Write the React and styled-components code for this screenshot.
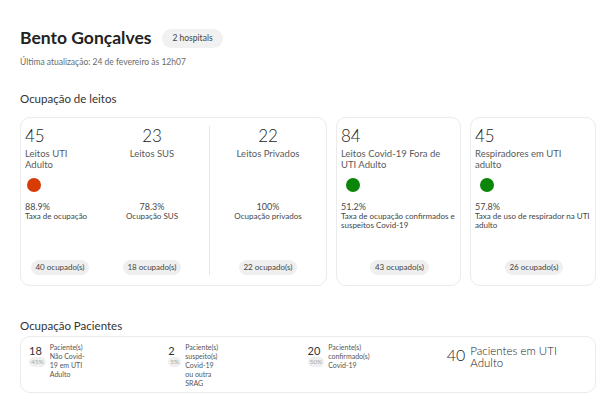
import React from 'react';
import styled, { createGlobalStyle } from 'styled-components';

const Global = createGlobalStyle`
  html, body { margin: 0; padding: 0; background: #fff; }
  body { font-family: Lato, "Noto Sans", sans-serif; color: #333; }
  * { box-sizing: border-box; }
`;

const Page = styled.div`
  width: 600px;
  padding: 28px 4px 0 20px;
`;

const TitleRow = styled.div`
  display: flex;
  align-items: center;
  gap: 11px;
  height: 20px;
`;

const Title = styled.h1`
  margin: 0;
  font-size: 17.5px;
  line-height: 20px;
  font-weight: 700;
  color: #222;
`;

const Tag = styled.span`
  display: inline-block;
  height: 19px;
  line-height: 19px;
  padding: 0 10px;
  border-radius: 10px;
  background: #f1f1f1;
  color: #444;
  font-size: 8.5px;
`;

const Updated = styled.div`
  margin-top: 9px;
  font-size: 8.5px;
  line-height: 10px;
  color: #6b6b6b;
`;

const SectionTitle = styled.h2`
  margin: ${p => p.$top}px 0 0;
  font-size: 11.5px;
  line-height: 14px;
  font-weight: 400;
  color: #333;
`;

const CardsRow = styled.div`
  margin-top: 11px;
  display: flex;
  gap: 9px;
  height: 169px;
`;

const Card = styled.div`
  width: ${p => p.$w}px;
  border: 1px solid #ebebeb;
  border-radius: 10px;
  background: #fff;
  padding: 8px 2px 10px 4px;
  display: flex;
  flex-direction: column;
`;

const WideCard = styled(Card)`
  display: grid;
  grid-template-columns: 70px 114px 1px 1fr;
  padding: 8px 0 10px 4px;
`;

const Divider = styled.div`
  background: #e6e6e6;
  align-self: stretch;
`;

const Stat = styled.div`
  display: flex;
  flex-direction: column;
  align-items: ${p => (p.$center ? 'center' : 'flex-start')};
  text-align: ${p => (p.$center ? 'center' : 'left')};
  min-width: 0;
  height: 100%;
`;

const Num = styled.div`
  font-size: 17px;
  line-height: 19px;
  font-weight: 300;
  color: #1c1c1c;
`;

const Label = styled.div`
  margin-top: 4px;
  font-size: 9.5px;
  line-height: 10.5px;
  height: 21px;
  color: #5a5a5a;
  max-width: ${p => p.$max || 105}px;
`;

const DotSlot = styled.div`
  margin-top: 8px;
  height: 14px;
  padding-left: ${p => p.$inset}px;
`;

const Dot = styled.span`
  display: block;
  width: 14px;
  height: 14px;
  border-radius: 50%;
  background: ${p => p.$color};
`;

const Pct = styled.div`
  margin-top: 8.5px;
  font-size: 9px;
  line-height: 11px;
  color: #4a4a4a;
`;

const Desc = styled.div`
  font-size: 8px;
  line-height: 9.5px;
  color: #444;
`;

const Pill = styled.div`
  margin-top: auto;
  align-self: center;
  height: 15px;
  line-height: 15px;
  padding: 0 4.5px;
  border-radius: 8px;
  background: #efefef;
  color: #444;
  font-size: 8px;
  white-space: nowrap;
`;

const PatientsCard = styled.div`
  margin-top: 3px;
  width: 576px;
  border: 1px solid #ebebeb;
  border-radius: 10px;
  padding: 6px 9px 4px 8px;
  display: grid;
  grid-template-columns: repeat(4, 1fr);
`;

const PItem = styled.div`
  display: flex;
  align-items: flex-start;
  gap: 4px;
`;

const PLeft = styled.div`
  display: flex;
  flex-direction: column;
  align-items: flex-start;
  padding-top: 2px;
`;

const PNum = styled.div`
  font-size: 11px;
  line-height: 12px;
  color: #333;
`;

const PBadge = styled.div`
  font-size: 6.5px;
  line-height: 10px;
  padding: 0 2px;
  border-radius: 5px;
  background: #efefef;
  color: #a8a8a8;
`;

const PText = styled.div`
  font-size: 7px;
  line-height: 9px;
  color: #555;
  max-width: ${p => p.$max}px;
`;

const BigItem = styled.div`
  display: flex;
  align-items: flex-start;
  gap: 5px;
  padding-top: 2px;
`;

const BigNum = styled.div`
  font-size: 16px;
  line-height: 19px;
  font-weight: 300;
  color: #1c1c1c;
`;

const BigText = styled.div`
  font-size: 11.5px;
  line-height: 11.5px;
  font-weight: 300;
  color: #222;
  max-width: 100px;
`;

const RED = '#d93b07';
const GREEN = '#0b860b';

function StatBlock({ num, label, pct, desc, pill, dot, center, labelMax, inset = 3 }) {
  return (
    <Stat $center={center}>
      <Num>{num}</Num>
      <Label $max={labelMax}>{label}</Label>
      <DotSlot $inset={inset}>{dot && <Dot $color={dot} />}</DotSlot>
      <Pct>{pct}</Pct>
      <Desc>{desc}</Desc>
      <Pill>{pill}</Pill>
    </Stat>
  );
}

const patients = [
  { n: '18', p: '45%', t: 'Paciente(s) Não Covid-19 em UTI Adulto', max: 38 },
  { n: '2', p: '5%', t: 'Paciente(s) suspeito(s) Covid-19 ou outra SRAG', max: 36 },
  { n: '20', p: '50%', t: 'Paciente(s) confirmado(s) Covid-19', max: 50 },
];

export default function App() {
  return (
    <>
      <Global />
      <Page>
        <TitleRow>
          <Title>Bento Gonçalves</Title>
          <Tag>2 hospitals</Tag>
        </TitleRow>
        <Updated>Última atualização: 24 de fevereiro às 12h07</Updated>

        <SectionTitle $top={25}>Ocupação de leitos</SectionTitle>
        <CardsRow>
          <WideCard $w={307}>
            <StatBlock
              num="45"
              label="Leitos UTI Adulto"
              labelMax={62}
              dot={RED}
              inset={2}
              pct="88.9%"
              desc="Taxa de ocupação"
              pill="40 ocupado(s)"
            />
            <StatBlock center num="23" label="Leitos SUS" pct="78.3%" desc="Ocupação SUS" pill="18 ocupado(s)" />
            <Divider />
            <StatBlock center num="22" label="Leitos Privados" pct="100%" desc="Ocupação privados" pill="22 ocupado(s)" />
          </WideCard>
          <Card $w={125}>
            <StatBlock
              num="84"
              label="Leitos Covid-19 Fora de UTI Adulto"
              dot={GREEN}
              inset={5}
              pct="51.2%"
              desc="Taxa de ocupação confirmados e suspeitos Covid-19"
              pill="43 ocupado(s)"
            />
          </Card>
          <Card $w={126}>
            <StatBlock
              num="45"
              label="Respiradores em UTI adulto"
              dot={GREEN}
              inset={5}
              pct="57.8%"
              desc="Taxa de uso de respirador na UTI adulto"
              pill="26 ocupado(s)"
            />
          </Card>
        </CardsRow>

        <SectionTitle $top={33}>Ocupação Pacientes</SectionTitle>
        <PatientsCard>
          {patients.map(item => (
            <PItem key={item.n}>
              <PLeft>
                <PNum>{item.n}</PNum>
                <PBadge>{item.p}</PBadge>
              </PLeft>
              <PText $max={item.max}>{item.t}</PText>
            </PItem>
          ))}
          <BigItem>
            <BigNum>40</BigNum>
            <BigText>Pacientes em UTI Adulto</BigText>
          </BigItem>
        </PatientsCard>
      </Page>
    </>
  );
}
